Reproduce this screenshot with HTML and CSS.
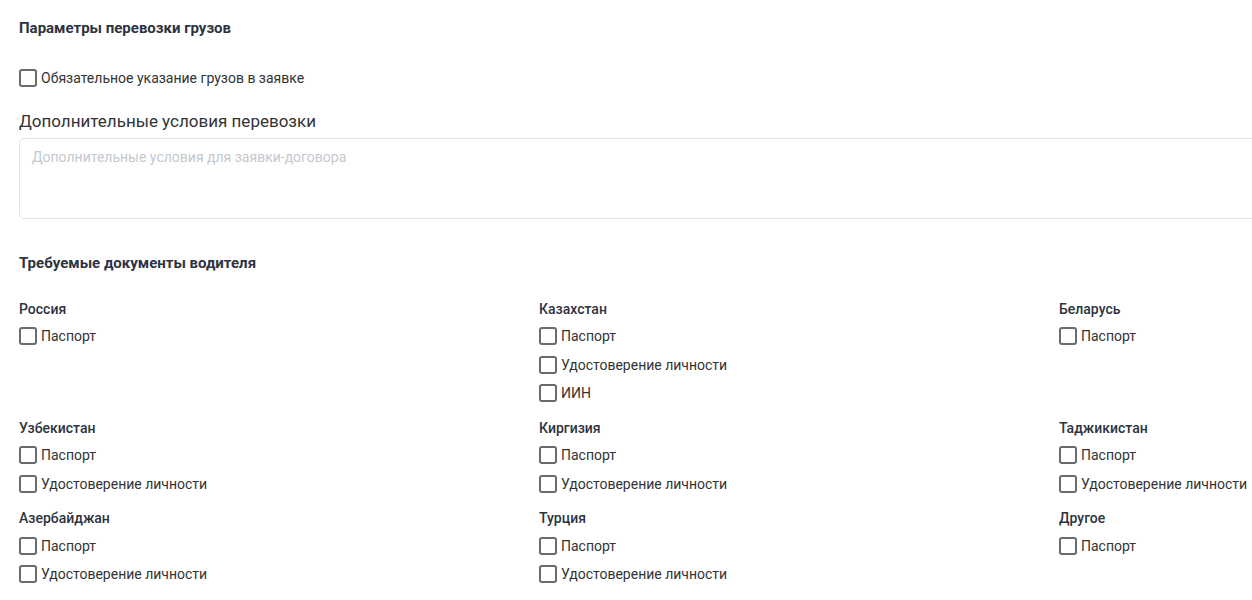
FILE: index.html
```html
<!DOCTYPE html>
<html lang="ru">
<head>
    <meta charset="UTF-8">
    <title>Параметры перевозки грузов</title>
    <link rel="stylesheet" href="styles.css">
</head>
<body>
    <div class="form">
        <h3 class="section-title">Параметры перевозки грузов</h3>
        <label class="check single"><input type="checkbox"><span>Обязательное указание грузов в заявке</span></label>

        <div class="field-label">Дополнительные условия перевозки</div>
        <textarea class="area" placeholder="Дополнительные условия для заявки-договора"></textarea>

        <h3 class="section-title docs-title">Требуемые документы водителя</h3>
        <div class="docs">
            <div class="country">
                <div class="country-name">Россия</div>
                <label class="check"><input type="checkbox"><span>Паспорт</span></label>
            </div>
            <div class="country">
                <div class="country-name">Казахстан</div>
                <label class="check"><input type="checkbox"><span>Паспорт</span></label>
                <label class="check"><input type="checkbox"><span>Удостоверение личности</span></label>
                <label class="check"><input type="checkbox"><span>ИИН</span></label>
            </div>
            <div class="country">
                <div class="country-name">Беларусь</div>
                <label class="check"><input type="checkbox"><span>Паспорт</span></label>
            </div>
            <div class="country">
                <div class="country-name">Узбекистан</div>
                <label class="check"><input type="checkbox"><span>Паспорт</span></label>
                <label class="check"><input type="checkbox"><span>Удостоверение личности</span></label>
            </div>
            <div class="country">
                <div class="country-name">Киргизия</div>
                <label class="check"><input type="checkbox"><span>Паспорт</span></label>
                <label class="check"><input type="checkbox"><span>Удостоверение личности</span></label>
            </div>
            <div class="country">
                <div class="country-name">Таджикистан</div>
                <label class="check"><input type="checkbox"><span>Паспорт</span></label>
                <label class="check"><input type="checkbox"><span>Удостоверение личности</span></label>
            </div>
            <div class="country">
                <div class="country-name">Азербайджан</div>
                <label class="check"><input type="checkbox"><span>Паспорт</span></label>
                <label class="check"><input type="checkbox"><span>Удостоверение личности</span></label>
            </div>
            <div class="country">
                <div class="country-name">Турция</div>
                <label class="check"><input type="checkbox"><span>Паспорт</span></label>
                <label class="check"><input type="checkbox"><span>Удостоверение личности</span></label>
            </div>
            <div class="country">
                <div class="country-name">Другое</div>
                <label class="check"><input type="checkbox"><span>Паспорт</span></label>
            </div>
        </div>
    </div>
</body>
</html>
```

FILE: styles.css
```css
html, body {
    margin: 0;
    background: #fff;
    overflow: hidden;
}
body {
    font-family: Roboto, "Noto Sans", sans-serif;
    color: #333;
}
.form {
    width: 1560px;
    padding: 18px 0 0 19px;
}
.section-title {
    margin: 0;
    font-size: 15px;
    font-weight: 700;
    line-height: 20px;
    color: #2d3340;
}
.check {
    display: flex;
    align-items: center;
    font-size: 14px;
    line-height: 20px;
    color: #333;
    height: 28.5px;
}
.check input {
    appearance: none;
    -webkit-appearance: none;
    width: 18px;
    height: 18px;
    margin: 0 4px 0 0;
    border: 2px solid #6b6b6b;
    border-radius: 3px;
    box-sizing: border-box;
    background: #fff;
}
.check.single {
    margin-top: 26px;
}
.field-label {
    margin-top: 16px;
    font-size: 17px;
    line-height: 24px;
    color: #333;
}
.area {
    display: block;
    box-sizing: border-box;
    width: 1560px;
    height: 81px;
    margin-top: 5px;
    padding: 10px 12px;
    border: 1px solid #dfe5ea;
    border-radius: 5px;
    font-family: inherit;
    font-size: 14px;
    resize: none;
    outline: none;
}
.area::placeholder {
    color: #c4c8cf;
}
.docs-title {
    margin-top: 34px;
}
.docs {
    display: grid;
    grid-template-columns: 520px 520px 520px;
    row-gap: 10px;
    margin-top: 26px;
}
.country-name {
    font-size: 14px;
    font-weight: 500;
    line-height: 20px;
    color: #2d3340;
    margin-bottom: 3.5px;
}
```
